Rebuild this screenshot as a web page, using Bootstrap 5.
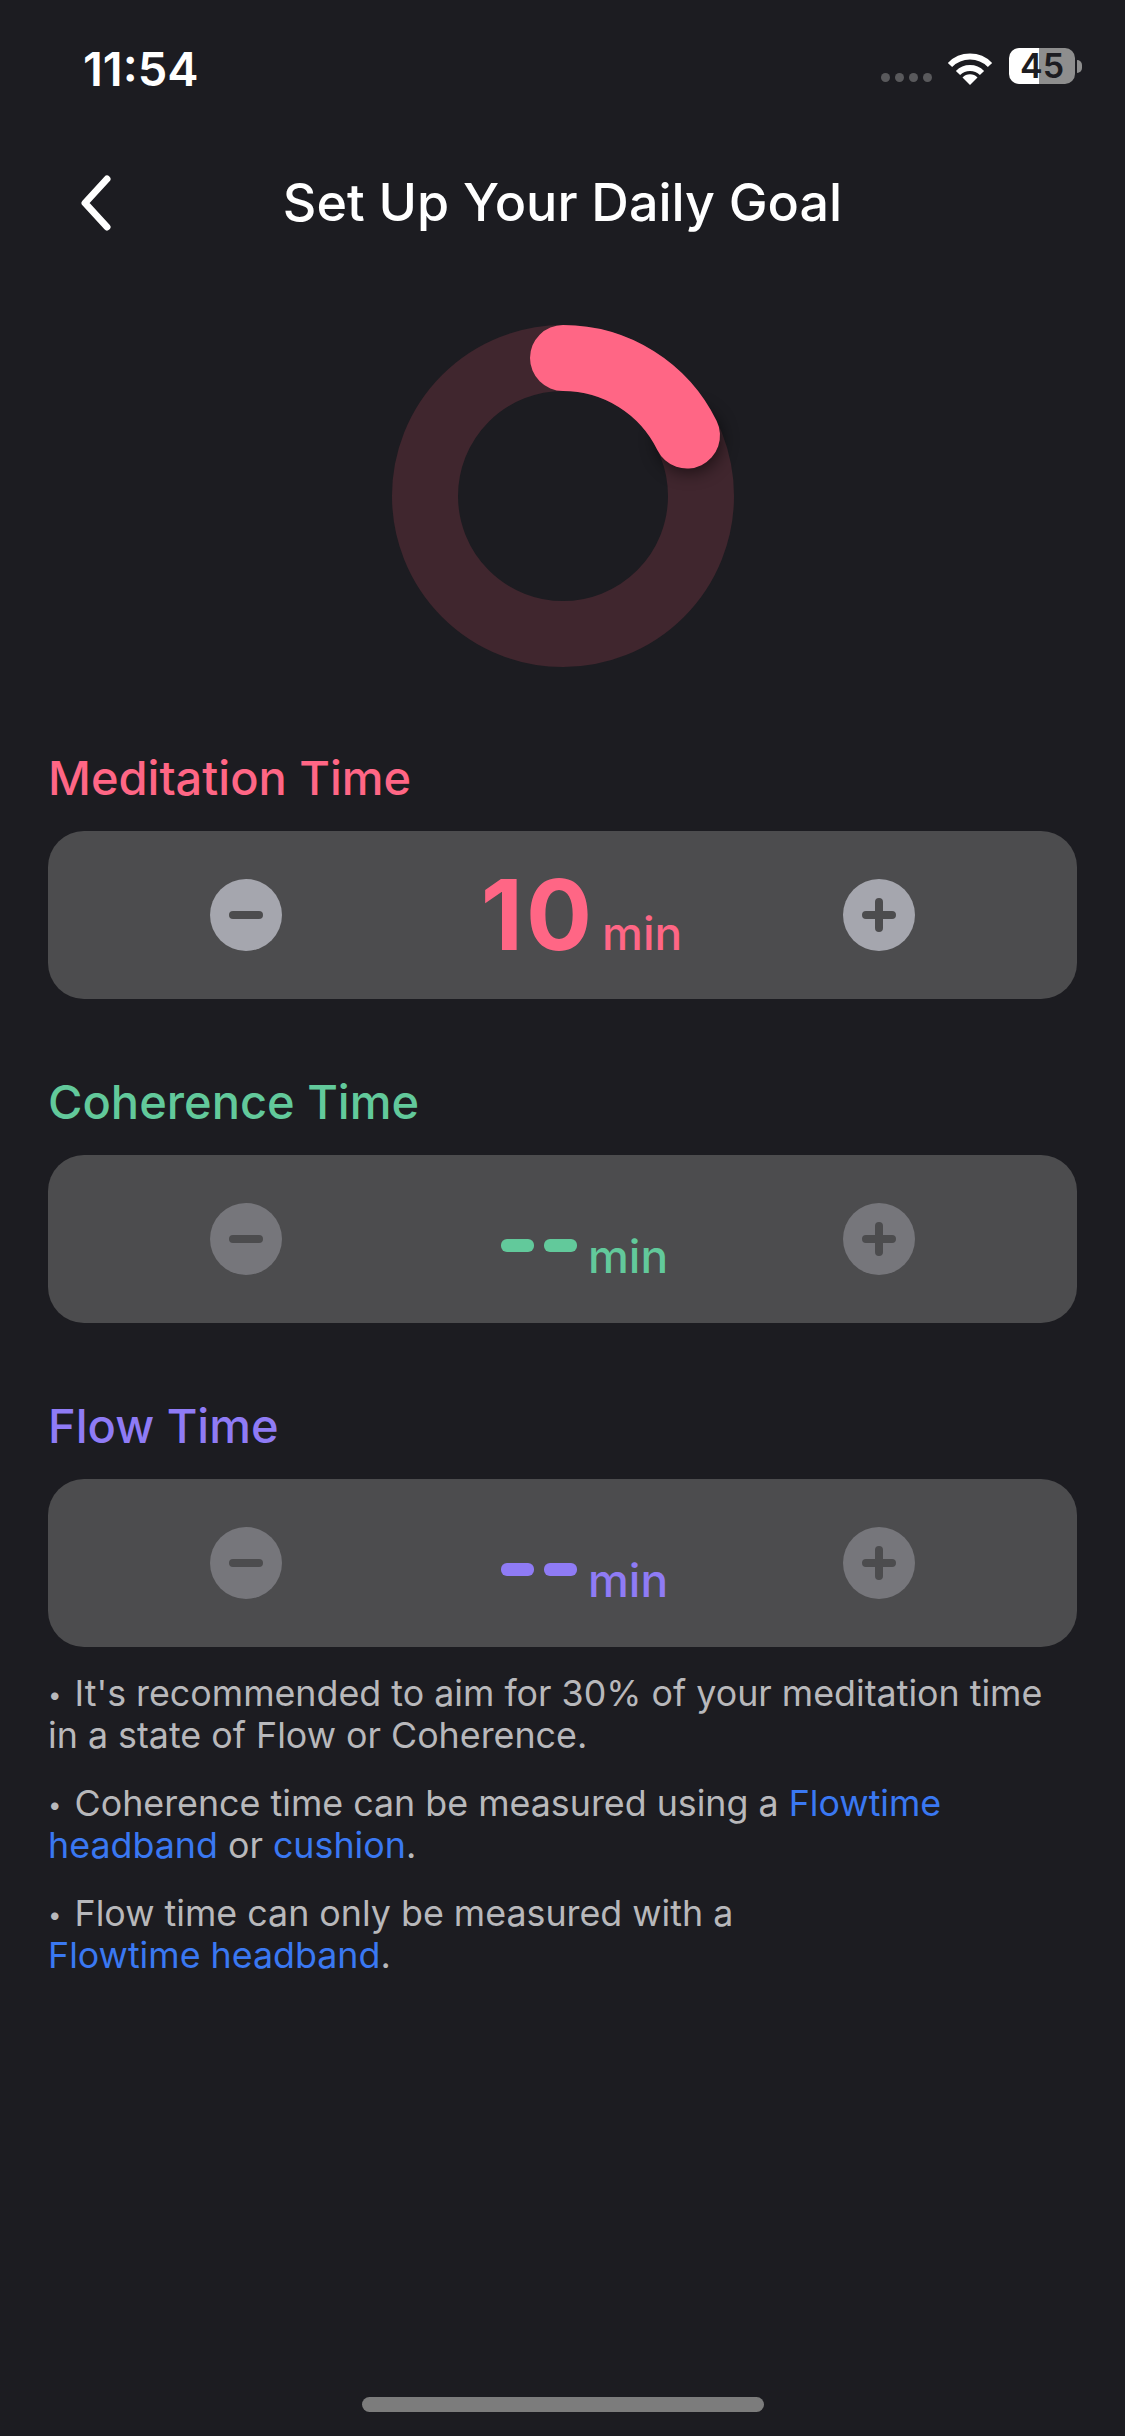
<!DOCTYPE html>
<html lang="en">
<head>
    <meta charset="UTF-8">
    <meta name="viewport" content="width=device-width, initial-scale=1.0">
    <title>Set Up Your Daily Goal</title>
    <link href="https://cdn.jsdelivr.net/npm/bootstrap@5.3.0/dist/css/bootstrap.min.css" rel="stylesheet">
    <style>
        :root {
            --bg-color: #1c1c21;
            --panel-color: #4c4c4e;
            --pink: #ff6685;
            --green: #62c99b;
            --purple: #8f7bf5;
        }

        body {
            background-color: var(--bg-color);
            font-family: Inter, "Liberation Sans", sans-serif;
            color: #fff;
        }

        .screen {
            width: 1125px;
            height: 2436px;
        }

        .status-row {
            height: 100px;
            padding: 48px 43px 0 83px;
        }

        .status-time {
            font-size: 47px;
            line-height: 42px;
            font-weight: 600;
        }

        .signal-dots {
            gap: 5px;
            margin: 25px 15px 0 0;
        }

        .signal-dots span {
            width: 9px;
            height: 9px;
            border-radius: 50%;
            background: #59595c;
        }

        .battery {
            width: 66px;
            height: 36px;
            margin-left: 16px;
            border-radius: 10px;
            background: linear-gradient(90deg, #fff 0 30px, #8e8e8e 30px);
            color: #1c1c21;
            font-size: 34px;
            line-height: 36px;
            font-weight: 600;
            text-align: center;
        }

        .battery-nub {
            width: 5px;
            height: 13px;
            margin: 12px 0 0 2px;
            border-radius: 0 5px 5px 0;
            background: #8e8e8e;
        }

        .title-row {
            height: 104px;
            margin-top: 51px;
            padding: 0 81px;
        }

        .title-text {
            font-size: 52px;
            line-height: 60px;
            font-weight: 500;
            margin: 0;
        }

        .title-side {
            width: 30px;
        }

        .ring-wrap {
            margin-top: 61px;
            height: 360px;
        }

        .goal-block {
            margin-top: 74px;
            padding: 0 48px;
        }

        .goal-title {
            font-size: 47px;
            line-height: 56px;
            font-weight: 500;
            margin: 0 0 25px;
        }

        .goal-panel {
            height: 168px;
            border-radius: 36px;
            background: var(--panel-color);
            padding: 0 162px;
            margin-bottom: 75px;
        }

        .goal-btn {
            width: 72px;
            height: 72px;
            padding: 0;
            border: 0;
            border-radius: 50%;
            background: #a5a6ae;
        }

        .goal-btn.is-off {
            background: #76767b;
        }

        /* readout sits right of centre in the panel */
        .goal-readout {
            margin-left: 38px;
        }

        .goal-readout.is-empty {
            margin-left: 44px;
            margin-top: 39px;
        }

        .goal-value {
            font-size: 98px;
            line-height: 98px;
            font-weight: 700;
            letter-spacing: 3px;
        }

        .goal-unit {
            font-size: 46px;
            line-height: 44px;
            font-weight: 500;
            margin-left: 7px;
        }

        .is-empty .goal-unit {
            margin-top: -5px;
        }

        .dash-pair {
            gap: 10px;
            margin-right: 4px;
        }

        .dash-pair span {
            width: 33px;
            height: 13px;
            border-radius: 6px;
            background: currentColor;
        }

        .tone-pink { color: var(--pink); }
        .tone-green { color: var(--green); }
        .tone-purple { color: var(--purple); }

        .notes {
            padding: 0 48px;
            margin-top: -50px;
            font-size: 35.8px;
            line-height: 42px;
            color: #b8b8bb;
        }

        .notes p {
            margin: 0 0 26px;
        }

        .notes a {
            color: #3a78f2;
            text-decoration: none;
        }

        .note-dot {
            font-size: 24px;
            line-height: 1;
            vertical-align: 3px;
            margin-right: 3px;
        }

        .home-bar {
            width: 402px;
            height: 15px;
            margin: 0 auto 24px;
            border-radius: 8px;
            background: #7c7c7c;
        }
    </style>
</head>
<body>
    <div class="screen d-flex flex-column">
        <div class="status-row d-flex align-items-start">
            <div class="status-time">11:54</div>
            <div class="ms-auto d-flex align-items-start">
                <div class="signal-dots d-flex"><span></span><span></span><span></span><span></span></div>
                <svg width="46" height="36" viewBox="0 0 46 36" class="mt-1" fill="none" stroke="#fff" stroke-width="6">
                    <path d="M3 13 A28 28 0 0 1 43 13"/>
                    <path d="M11 21 A17 17 0 0 1 35 21"/>
                    <path d="M23 33 L15.5 25.5 A10.5 10.5 0 0 1 30.5 25.5 Z" fill="#fff" stroke="none"/>
                </svg>
                <div class="battery">45</div>
                <div class="battery-nub"></div>
            </div>
        </div>

        <div class="title-row d-flex align-items-center justify-content-between">
            <svg class="title-side" width="30" height="56" viewBox="0 0 30 56" fill="none" stroke="#fff" stroke-width="7" stroke-linecap="round" stroke-linejoin="round">
                <path d="M26 4 L4 28 L26 52"/>
            </svg>
            <h1 class="title-text">Set Up Your Daily Goal</h1>
            <div class="title-side"></div>
        </div>

        <div class="ring-wrap d-flex justify-content-center">
            <svg width="360" height="360" viewBox="-180 -180 360 360" fill="none">
                <defs>
                    <filter id="capShadow" x="-100%" y="-100%" width="300%" height="300%">
                        <feGaussianBlur stdDeviation="9"/>
                    </filter>
                </defs>
                <circle r="138" stroke="#40262e" stroke-width="66"/>
                <circle cx="126" cy="-56" r="32" fill="#000" opacity="0.6" filter="url(#capShadow)"/>
                <path d="M0 -138 A138 138 0 0 1 124 -60.5" stroke="#ff6685" stroke-width="66" stroke-linecap="round"/>
            </svg>
        </div>

        <div class="goal-block">
            <h2 class="goal-title tone-pink">Meditation Time</h2>
            <div class="goal-panel d-flex align-items-center justify-content-between">
                <button type="button" class="goal-btn d-flex align-items-center justify-content-center">
                    <svg width="36" height="36" viewBox="0 0 36 36"><path d="M5 18 H31" stroke="#4c4c4e" stroke-width="8" stroke-linecap="round"/></svg>
                </button>
                <div class="goal-readout d-flex align-items-baseline tone-pink">
                    <span class="goal-value">10</span><span class="goal-unit">min</span>
                </div>
                <button type="button" class="goal-btn d-flex align-items-center justify-content-center">
                    <svg width="36" height="36" viewBox="0 0 36 36"><path d="M5 18 H31 M18 5 V31" stroke="#4c4c4e" stroke-width="8" stroke-linecap="round"/></svg>
                </button>
            </div>

            <h2 class="goal-title tone-green">Coherence Time</h2>
            <div class="goal-panel d-flex align-items-center justify-content-between">
                <button type="button" class="goal-btn is-off d-flex align-items-center justify-content-center">
                    <svg width="36" height="36" viewBox="0 0 36 36"><path d="M5 18 H31" stroke="#4c4c4e" stroke-width="8" stroke-linecap="round"/></svg>
                </button>
                <div class="goal-readout is-empty d-flex align-items-start tone-green">
                    <div class="dash-pair d-flex"><span></span><span></span></div>
                    <span class="goal-unit">min</span>
                </div>
                <button type="button" class="goal-btn is-off d-flex align-items-center justify-content-center">
                    <svg width="36" height="36" viewBox="0 0 36 36"><path d="M5 18 H31 M18 5 V31" stroke="#4c4c4e" stroke-width="8" stroke-linecap="round"/></svg>
                </button>
            </div>

            <h2 class="goal-title tone-purple">Flow Time</h2>
            <div class="goal-panel d-flex align-items-center justify-content-between">
                <button type="button" class="goal-btn is-off d-flex align-items-center justify-content-center">
                    <svg width="36" height="36" viewBox="0 0 36 36"><path d="M5 18 H31" stroke="#4c4c4e" stroke-width="8" stroke-linecap="round"/></svg>
                </button>
                <div class="goal-readout is-empty d-flex align-items-start tone-purple">
                    <div class="dash-pair d-flex"><span></span><span></span></div>
                    <span class="goal-unit">min</span>
                </div>
                <button type="button" class="goal-btn is-off d-flex align-items-center justify-content-center">
                    <svg width="36" height="36" viewBox="0 0 36 36"><path d="M5 18 H31 M18 5 V31" stroke="#4c4c4e" stroke-width="8" stroke-linecap="round"/></svg>
                </button>
            </div>
        </div>

        <div class="notes">
            <p><span class="note-dot">•</span> It's recommended to aim for 30% of your meditation time<br>in a state of Flow or Coherence.</p>
            <p><span class="note-dot">•</span> Coherence time can be measured using a <a href="#">Flowtime<br>headband</a> or <a href="#">cushion</a>.</p>
            <p><span class="note-dot">•</span> Flow time can only be measured with a<br><a href="#">Flowtime headband</a>.</p>
        </div>

        <div class="home-bar mt-auto"></div>
    </div>

    <script src="https://cdn.jsdelivr.net/npm/bootstrap@5.3.0/dist/js/bootstrap.bundle.min.js"></script>
</body>
</html>
